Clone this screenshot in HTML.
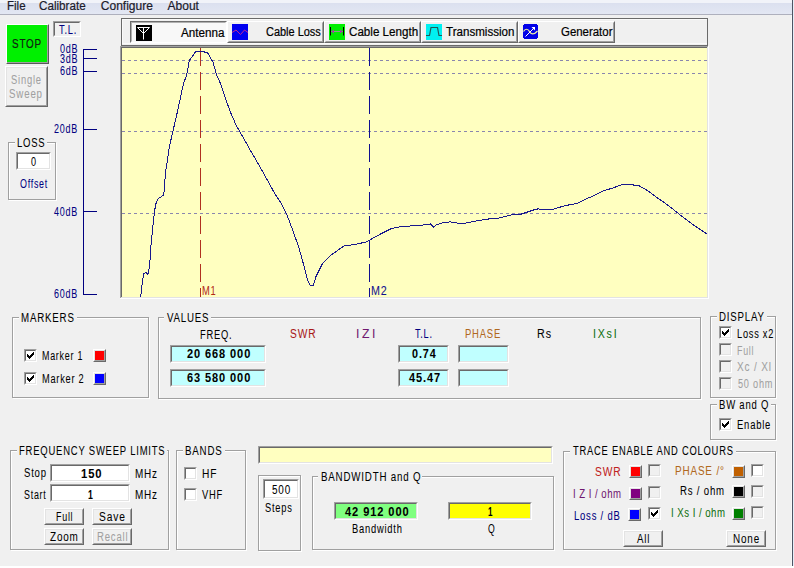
<!DOCTYPE html><html><head><meta charset="utf-8"><style>
html,body{margin:0;padding:0;width:794px;height:568px;overflow:hidden;background:#f0f0f0;position:relative}
.t{position:absolute;font-family:'Liberation Sans',sans-serif;white-space:nowrap;transform-origin:0 0;-webkit-text-stroke:0.05px currentColor}
.r{position:absolute;box-sizing:content-box}
</style></head><body>
<div class="r" style="left:0;top:0;width:794px;height:3px;background:#f1f3f9"></div>
<div class="r" style="left:0;top:3px;width:794px;height:11px;background:linear-gradient(#dbe0ef,#e3e7f3)"></div>
<div class="r" style="left:0px;top:14px;width:794px;height:1px;background:#aeb0bd"></div>
<div class="t" style="left:6.64px;top:-1px;font-size:12px;line-height:14px;color:#1b1b2b;transform:scaleX(0.961);-webkit-text-stroke:0.2px currentColor;">File</div>
<div class="t" style="left:39.00px;top:-1px;font-size:12px;line-height:14px;color:#1b1b2b;transform:scaleX(0.971);-webkit-text-stroke:0.2px currentColor;">Calibrate</div>
<div class="t" style="left:100.80px;top:-1px;font-size:12px;line-height:14px;color:#1b1b2b;-webkit-text-stroke:0.2px currentColor;">Configure</div>
<div class="t" style="left:167.60px;top:-1px;font-size:12px;line-height:14px;color:#1b1b2b;-webkit-text-stroke:0.2px currentColor;">About</div>
<div class="r" style="left:792px;top:0px;width:1px;height:566px;background:#4d5564"></div>
<div class="r" style="left:791px;top:15px;width:1px;height:551px;background:#f8f8f8"></div>
<div class="r" style="left:793px;top:0px;width:1px;height:568px;background:#e6eef8"></div>
<div class="r" style="left:0px;top:566px;width:794px;height:2px;background:#ffffff"></div>
<div class="r" style="left:6px;top:24px;width:41px;height:38px;border:1px solid;border-color:#fff #5a5a5a #5a5a5a #fff"></div>
<div class="r" style="left:7px;top:25px;width:40px;height:37px;border:solid #a0a0a0;border-width:0 1px 1px 0;background:#00f000"></div>
<div class="t" style="left:11.98px;top:37px;font-size:12px;line-height:14px;letter-spacing:1.0px;color:#102010;transform:scaleX(0.821);-webkit-text-stroke:0.2px currentColor;">STOP</div>
<div class="r" style="left:5px;top:66px;width:41px;height:39px;border:1px solid;border-color:#fff #696969 #696969 #fff"></div>
<div class="r" style="left:6px;top:67px;width:39px;height:37px;border:1px solid;border-color:#e3e3e3 #a0a0a0 #a0a0a0 #e3e3e3;background:#f0f0f0"></div>
<div class="t" style="left:10.62px;top:73px;font-size:12px;line-height:14px;letter-spacing:1.0px;color:#a0a0a0;transform:scaleX(0.781);">Single</div>
<div class="t" style="left:8.79px;top:87px;font-size:12px;line-height:14px;letter-spacing:1.0px;color:#a0a0a0;transform:scaleX(0.812);">Sweep</div>
<div class="r" style="left:53px;top:21px;width:26px;height:14px;border:1px solid;border-color:#a0a0a0 #fff #fff #a0a0a0"></div>
<div class="r" style="left:54px;top:22px;width:24px;height:12px;border:1px solid;border-color:#696969 #f0f0f0 #f0f0f0 #696969;background:#f0f0f0"></div>
<div class="t" style="left:59.10px;top:23px;font-size:12px;line-height:14px;letter-spacing:1.0px;color:#000080;transform:scaleX(0.777);">T.L.</div>
<div class="r" style="left:83px;top:49px;width:1px;height:246px;background:#000080"></div>
<div class="r" style="left:83px;top:49px;width:14px;height:1px;background:#000080"></div>
<div class="r" style="left:83px;top:58px;width:14px;height:1px;background:#000080"></div>
<div class="r" style="left:83px;top:71px;width:14px;height:1px;background:#000080"></div>
<div class="r" style="left:83px;top:129px;width:14px;height:1px;background:#000080"></div>
<div class="r" style="left:83px;top:211px;width:14px;height:1px;background:#000080"></div>
<div class="r" style="left:83px;top:294px;width:14px;height:1px;background:#000080"></div>
<div class="t" style="left:59.70px;top:42px;font-size:12px;line-height:14px;letter-spacing:1.0px;color:#000080;transform:scaleX(0.752);">0dB</div>
<div class="t" style="left:59.70px;top:52px;font-size:12px;line-height:14px;letter-spacing:1.0px;color:#000080;transform:scaleX(0.752);">3dB</div>
<div class="t" style="left:59.70px;top:64px;font-size:12px;line-height:14px;letter-spacing:1.0px;color:#000080;transform:scaleX(0.752);">6dB</div>
<div class="t" style="left:54.00px;top:122px;font-size:12px;line-height:14px;letter-spacing:1.0px;color:#000080;transform:scaleX(0.748);">20dB</div>
<div class="t" style="left:54.00px;top:205px;font-size:12px;line-height:14px;letter-spacing:1.0px;color:#000080;transform:scaleX(0.748);">40dB</div>
<div class="t" style="left:54.00px;top:287px;font-size:12px;line-height:14px;letter-spacing:1.0px;color:#000080;transform:scaleX(0.748);">60dB</div>
<div class="r" style="left:9px;top:143px;width:46px;height:56px;border:1px solid #fff"></div>
<div class="r" style="left:8px;top:142px;width:46px;height:56px;border:1px solid #a0a0a0"></div>
<div class="r" style="left:15px;top:141px;width:32px;height:4px;background:#f0f0f0"></div>
<div class="t" style="left:16.81px;top:136px;font-size:12px;line-height:14px;letter-spacing:1.0px;color:#000;transform:scaleX(0.791);">LOSS</div>
<div class="r" style="left:16px;top:152px;width:33px;height:16px;border:1px solid;border-color:#a0a0a0 #fff #fff #a0a0a0"></div>
<div class="r" style="left:17px;top:153px;width:31px;height:14px;border:1px solid;border-color:#696969 #e3e3e3 #e3e3e3 #696969;background:#fff"></div>
<div class="t" style="left:31.00px;top:155px;font-size:12px;line-height:14px;letter-spacing:1.0px;color:#000;transform:scaleX(0.757);">0</div>
<div class="t" style="left:19.80px;top:177px;font-size:12px;line-height:14px;letter-spacing:1.0px;color:#000080;transform:scaleX(0.741);">Offset</div>
<div class="r" style="left:121px;top:18px;width:585px;height:26px;border:1px solid;border-color:#6a6a6a #6a6a6a #6a6a6a #6a6a6a;background:#f0f0f0"></div>
<div class="r" style="left:122px;top:19px;width:585px;height:1px;background:#fafafa"></div>
<div class="r" style="left:122px;top:19px;width:1px;height:25px;background:#fafafa"></div>
<div class="r" style="left:130px;top:21px;width:95px;height:20px;border:1px solid;border-color:#6e6e6e #fff #fff #6e6e6e"></div>
<div class="r" style="left:131px;top:22px;width:93px;height:18px;border:1px solid;border-color:#b0b0b0 #f8f8f8 #f8f8f8 #b0b0b0;background:#f8f8f8"></div>
<svg class="r" style="left:136px;top:25px" width="16" height="16"><rect width="16" height="16" fill="#000"/><path d="M1.5 2.5H13.5M1.5 2.5L7.5 8.5L13.5 2.5M7.5 2.5V14.5" stroke="#fff" stroke-width="1" fill="none"/></svg>
<div class="t" style="left:180.50px;top:26px;font-size:12px;line-height:14px;color:#000;transform:scaleX(0.973);-webkit-text-stroke:0.2px currentColor;">Antenna</div>
<div class="r" style="left:227px;top:21px;width:95px;height:20px;border:1px solid;border-color:#fff #696969 #696969 #fff"></div>
<div class="r" style="left:228px;top:22px;width:93px;height:18px;border:1px solid;border-color:#f0f0f0 #a0a0a0 #a0a0a0 #f0f0f0"></div>
<div class="r" style="left:324px;top:21px;width:95px;height:20px;border:1px solid;border-color:#fff #696969 #696969 #fff"></div>
<div class="r" style="left:325px;top:22px;width:93px;height:18px;border:1px solid;border-color:#f0f0f0 #a0a0a0 #a0a0a0 #f0f0f0"></div>
<div class="r" style="left:421px;top:21px;width:95px;height:20px;border:1px solid;border-color:#fff #696969 #696969 #fff"></div>
<div class="r" style="left:422px;top:22px;width:93px;height:18px;border:1px solid;border-color:#f0f0f0 #a0a0a0 #a0a0a0 #f0f0f0"></div>
<div class="r" style="left:518px;top:21px;width:95px;height:20px;border:1px solid;border-color:#fff #696969 #696969 #fff"></div>
<div class="r" style="left:519px;top:22px;width:93px;height:18px;border:1px solid;border-color:#f0f0f0 #a0a0a0 #a0a0a0 #f0f0f0"></div>
<svg class="r" style="left:232px;top:24px" width="16" height="16"><rect width="16" height="16" fill="#0000f0"/><path d="M0 8.5L4 6L8.5 10.5L12.5 6L16 8.5" stroke="#c02890" stroke-width="1" fill="none"/></svg>
<div class="t" style="left:265.80px;top:25px;font-size:12px;line-height:14px;color:#000;transform:scaleX(0.913);-webkit-text-stroke:0.2px currentColor;">Cable Loss</div>
<svg class="r" style="left:329px;top:24px" width="16" height="16"><rect width="16" height="16" fill="#00ee00"/><path d="M1.5 3V11.5M14.5 3V11.5" stroke="#000" stroke-width="1"/><path d="M2 7.5H14" stroke="#909090" stroke-width="1"/><path d="M2 7.5L5 5.5V9.5Z M14 7.5L11 5.5V9.5Z" fill="#a040a0"/></svg>
<div class="t" style="left:348.50px;top:25px;font-size:12px;line-height:14px;color:#000;transform:scaleX(0.969);-webkit-text-stroke:0.2px currentColor;">Cable Length</div>
<svg class="r" style="left:426px;top:24px" width="16" height="16"><rect width="16" height="16" fill="#00f0f0"/><path d="M0 11.5H3.5L5 3.5H11.5L13 11.5H16" stroke="#205858" stroke-width="1.2" fill="none"/></svg>
<div class="t" style="left:445.70px;top:25px;font-size:12px;line-height:14px;color:#000;transform:scaleX(0.965);-webkit-text-stroke:0.2px currentColor;">Transmission</div>
<svg class="r" style="left:523px;top:24px" width="15" height="15"><path d="M1 0H14V1H15V14H14V15H1V14H0V1H1Z" fill="#0000e8"/><path d="M0.5 7.5C2 4.5 5 4.5 6.5 7.5S11 11 14.5 7" stroke="#f0f0a0" stroke-width="1.2" fill="none"/><path d="M2.5 12.5L11.5 3.5" stroke="#fff" stroke-width="1"/><path d="M8.5 3H12V6.5Z" fill="#fff"/></svg>
<div class="t" style="left:560.60px;top:25px;font-size:12px;line-height:14px;color:#000;transform:scaleX(0.952);-webkit-text-stroke:0.2px currentColor;">Generator</div>
<div class="r" style="left:122px;top:43px;width:585px;height:1px;background:#fafafa"></div>
<div class="r" style="left:120px;top:46px;width:589px;height:253px;background:#fff"></div>
<div class="r" style="left:120px;top:46px;width:588px;height:252px;background:#a0a0a0"></div>
<div class="r" style="left:121px;top:47px;width:587px;height:251px;background:#e3e3e3"></div>
<div class="r" style="left:121px;top:47px;width:586px;height:250px;background:#696969"></div>
<div class="r" style="left:122px;top:48px;width:585px;height:249px;background:#ffffc0"></div>
<svg class="r" style="left:122px;top:48px" width="585" height="249"><path d="M0 12.5H585" stroke="#8a86ae" stroke-width="1" stroke-dasharray="3 3"/><path d="M0 25.5H585" stroke="#8a86ae" stroke-width="1" stroke-dasharray="3 3"/><path d="M0 83.5H585" stroke="#8a86ae" stroke-width="1" stroke-dasharray="3 3"/><path d="M0 165.5H585" stroke="#8a86ae" stroke-width="1" stroke-dasharray="3 3"/><path d="M78.5 0V249" stroke="#b03020" stroke-width="1" stroke-dasharray="18 6"/><path d="M247.5 0V249" stroke="#101090" stroke-width="1" stroke-dasharray="18 6"/><polyline points="18.6,249.5 20.1,236.0 21.7,225.5 23.9,224.4 26.0,226.5 27.7,217.0 29.1,195.9 31.2,174.8 32.7,162.1 34.4,153.6 36.5,150.5 41.8,146.9 42.9,132.5 43.7,123.5 47.6,97.5 50.8,83.8 55.7,62.6 61.3,36.2 64.8,26.5 67.3,12.7 73.7,3.5 82.2,3.5 82.8,4.5 85.4,4.5 91.1,14.5 94.8,27.4 99.2,37.1 102.7,48.5 108.5,64.4 114.1,77.1 128.1,101.8 142.2,126.4 152.8,145.7 158.5,154.3 165.5,168.3 170.8,182.4 177.0,200.0 181.4,215.9 185.8,232.6 188.4,237.4 191.6,237.0 193.7,229.1 200.8,215.0 207.8,208.0 216.6,201.8 221.9,197.9 232.4,196.5 244.8,193.9 248.5,191.5 259.2,185.7 269.9,180.3 278.5,178.8 291.3,177.7 299.9,177.1 308.5,176.0 311.7,179.2 313.8,177.1 321.3,174.5 328.8,173.9 338.4,175.6 342.7,175.2 355.5,172.8 368.4,170.7 377.0,170.0 389.8,166.8 398.4,166.4 411.2,162.1 415.5,161.0 431.2,161.2 442.5,157.8 456.1,155.1 462.9,151.5 472.0,147.6 481.0,143.1 490.1,140.2 499.2,137.0 508.2,136.5 517.3,137.9 526.4,143.1 535.5,149.9 546.8,157.8 558.1,166.9 571.7,177.1 585.3,186.2" stroke="#18188c" stroke-width="1" fill="none" shape-rendering="crispEdges"/></svg>
<div class="t" style="left:201.92px;top:284px;font-size:12px;line-height:14px;letter-spacing:1.0px;color:#b02818;transform:scaleX(0.776);">M1</div>
<div class="t" style="left:371.01px;top:284px;font-size:12px;line-height:14px;letter-spacing:1.0px;color:#101090;transform:scaleX(0.894);">M2</div>
<div class="r" style="left:13px;top:318px;width:135px;height:79px;border:1px solid #fff"></div>
<div class="r" style="left:12px;top:317px;width:135px;height:79px;border:1px solid #a0a0a0"></div>
<div class="r" style="left:19px;top:316px;width:58px;height:4px;background:#f0f0f0"></div>
<div class="t" style="left:20.79px;top:311px;font-size:12px;line-height:14px;letter-spacing:1.0px;color:#000;transform:scaleX(0.809);">MARKERS</div>
<div class="r" style="left:24px;top:349px;width:11px;height:11px;border:1px solid;border-color:#a0a0a0 #fff #fff #a0a0a0"></div>
<div class="r" style="left:25px;top:350px;width:9px;height:9px;border:1px solid;border-color:#696969 #e3e3e3 #e3e3e3 #696969;background:#fff"></div>
<svg class="r" style="left:24px;top:349px" width="13" height="13"><path d="M9 3h1v1h-1zM8 4h1v1h-1zM9 4h1v1h-1zM3 5h1v1h-1zM7 5h1v1h-1zM8 5h1v1h-1zM9 5h1v1h-1zM3 6h1v1h-1zM4 6h1v1h-1zM6 6h1v1h-1zM7 6h1v1h-1zM8 6h1v1h-1zM3 7h1v1h-1zM4 7h1v1h-1zM5 7h1v1h-1zM6 7h1v1h-1zM7 7h1v1h-1zM4 8h1v1h-1zM5 8h1v1h-1zM6 8h1v1h-1zM5 9h1v1h-1z" fill="#000"/></svg>
<div class="t" style="left:42.06px;top:349px;font-size:12px;line-height:14px;letter-spacing:1.0px;color:#000;transform:scaleX(0.743);">Marker 1</div>
<div class="r" style="left:93px;top:349px;width:11px;height:11px;border:1px solid;border-color:#fff #696969 #696969 #fff"></div>
<div class="r" style="left:94px;top:350px;width:9px;height:9px;border:1px solid;border-color:#e3e3e3 #a0a0a0 #a0a0a0 #e3e3e3;background:#ff0000"></div>
<div class="r" style="left:24px;top:372px;width:11px;height:11px;border:1px solid;border-color:#a0a0a0 #fff #fff #a0a0a0"></div>
<div class="r" style="left:25px;top:373px;width:9px;height:9px;border:1px solid;border-color:#696969 #e3e3e3 #e3e3e3 #696969;background:#fff"></div>
<svg class="r" style="left:24px;top:372px" width="13" height="13"><path d="M9 3h1v1h-1zM8 4h1v1h-1zM9 4h1v1h-1zM3 5h1v1h-1zM7 5h1v1h-1zM8 5h1v1h-1zM9 5h1v1h-1zM3 6h1v1h-1zM4 6h1v1h-1zM6 6h1v1h-1zM7 6h1v1h-1zM8 6h1v1h-1zM3 7h1v1h-1zM4 7h1v1h-1zM5 7h1v1h-1zM6 7h1v1h-1zM7 7h1v1h-1zM4 8h1v1h-1zM5 8h1v1h-1zM6 8h1v1h-1zM5 9h1v1h-1z" fill="#000"/></svg>
<div class="t" style="left:42.03px;top:372px;font-size:12px;line-height:14px;letter-spacing:1.0px;color:#000;transform:scaleX(0.768);">Marker 2</div>
<div class="r" style="left:93px;top:372px;width:11px;height:11px;border:1px solid;border-color:#fff #696969 #696969 #fff"></div>
<div class="r" style="left:94px;top:373px;width:9px;height:9px;border:1px solid;border-color:#e3e3e3 #a0a0a0 #a0a0a0 #e3e3e3;background:#0000ff"></div>
<div class="r" style="left:159px;top:318px;width:541px;height:80px;border:1px solid #fff"></div>
<div class="r" style="left:158px;top:317px;width:541px;height:80px;border:1px solid #a0a0a0"></div>
<div class="r" style="left:164px;top:316px;width:47px;height:4px;background:#f0f0f0"></div>
<div class="t" style="left:167.00px;top:311px;font-size:12px;line-height:14px;letter-spacing:1.0px;color:#000;transform:scaleX(0.808);">VALUES</div>
<div class="t" style="left:200.02px;top:328px;font-size:12px;line-height:14px;letter-spacing:1.0px;color:#000;transform:scaleX(0.777);">FREQ.</div>
<div class="t" style="left:289.95px;top:327px;font-size:12px;line-height:14px;letter-spacing:1.0px;color:#a81818;transform:scaleX(0.852);">SWR</div>
<div class="t" style="left:355.98px;top:327px;font-size:12px;line-height:14px;letter-spacing:2.5px;color:#701870;transform:scaleX(1.018);">IZI</div>
<div class="t" style="left:414.50px;top:327px;font-size:12px;line-height:14px;letter-spacing:1.0px;color:#000080;transform:scaleX(0.759);">T.L.</div>
<div class="t" style="left:465.21px;top:327px;font-size:12px;line-height:14px;letter-spacing:1.0px;color:#b06820;transform:scaleX(0.789);">PHASE</div>
<div class="t" style="left:537.21px;top:327px;font-size:12px;line-height:14px;letter-spacing:1.0px;color:#000;transform:scaleX(0.893);">Rs</div>
<div class="t" style="left:592.61px;top:327px;font-size:12px;line-height:14px;letter-spacing:2px;color:#107010;transform:scaleX(0.888);">IXsI</div>
<div class="r" style="left:170px;top:345px;width:94px;height:16px;border:1px solid;border-color:#a0a0a0 #fff #fff #a0a0a0"></div>
<div class="r" style="left:171px;top:346px;width:92px;height:14px;border:1px solid;border-color:#696969 #e3e3e3 #e3e3e3 #696969;background:#c0ffff"></div>
<div class="t" style="left:187.00px;top:347px;font-size:12px;line-height:14px;font-weight:bold;letter-spacing:1.0px;color:#000;transform:scaleX(0.916);">20 668 000</div>
<div class="r" style="left:170px;top:369px;width:94px;height:16px;border:1px solid;border-color:#a0a0a0 #fff #fff #a0a0a0"></div>
<div class="r" style="left:171px;top:370px;width:92px;height:14px;border:1px solid;border-color:#696969 #e3e3e3 #e3e3e3 #696969;background:#c0ffff"></div>
<div class="t" style="left:187.00px;top:371px;font-size:12px;line-height:14px;font-weight:bold;letter-spacing:1.0px;color:#000;transform:scaleX(0.916);">63 580 000</div>
<div class="r" style="left:398px;top:345px;width:49px;height:16px;border:1px solid;border-color:#a0a0a0 #fff #fff #a0a0a0"></div>
<div class="r" style="left:399px;top:346px;width:47px;height:14px;border:1px solid;border-color:#696969 #e3e3e3 #e3e3e3 #696969;background:#c0ffff"></div>
<div class="t" style="left:411.50px;top:347px;font-size:12px;line-height:14px;font-weight:bold;letter-spacing:1.0px;color:#000;transform:scaleX(0.896);">0.74</div>
<div class="r" style="left:398px;top:369px;width:49px;height:16px;border:1px solid;border-color:#a0a0a0 #fff #fff #a0a0a0"></div>
<div class="r" style="left:399px;top:370px;width:47px;height:14px;border:1px solid;border-color:#696969 #e3e3e3 #e3e3e3 #696969;background:#c0ffff"></div>
<div class="t" style="left:408.50px;top:371px;font-size:12px;line-height:14px;font-weight:bold;letter-spacing:1.0px;color:#000;transform:scaleX(0.915);">45.47</div>
<div class="r" style="left:458px;top:345px;width:49px;height:16px;border:1px solid;border-color:#a0a0a0 #fff #fff #a0a0a0"></div>
<div class="r" style="left:459px;top:346px;width:47px;height:14px;border:1px solid;border-color:#696969 #e3e3e3 #e3e3e3 #696969;background:#c0ffff"></div>
<div class="r" style="left:458px;top:369px;width:49px;height:16px;border:1px solid;border-color:#a0a0a0 #fff #fff #a0a0a0"></div>
<div class="r" style="left:459px;top:370px;width:47px;height:14px;border:1px solid;border-color:#696969 #e3e3e3 #e3e3e3 #696969;background:#c0ffff"></div>
<div class="r" style="left:711px;top:317px;width:64px;height:80px;border:1px solid #fff"></div>
<div class="r" style="left:710px;top:316px;width:64px;height:80px;border:1px solid #a0a0a0"></div>
<div class="r" style="left:717px;top:315px;width:50px;height:4px;background:#f0f0f0"></div>
<div class="t" style="left:719.10px;top:310px;font-size:12px;line-height:14px;letter-spacing:1.0px;color:#000;transform:scaleX(0.804);">DISPLAY</div>
<div class="r" style="left:719px;top:326px;width:11px;height:11px;border:1px solid;border-color:#a0a0a0 #fff #fff #a0a0a0"></div>
<div class="r" style="left:720px;top:327px;width:9px;height:9px;border:1px solid;border-color:#696969 #e3e3e3 #e3e3e3 #696969;background:#fff"></div>
<svg class="r" style="left:719px;top:326px" width="13" height="13"><path d="M9 3h1v1h-1zM8 4h1v1h-1zM9 4h1v1h-1zM3 5h1v1h-1zM7 5h1v1h-1zM8 5h1v1h-1zM9 5h1v1h-1zM3 6h1v1h-1zM4 6h1v1h-1zM6 6h1v1h-1zM7 6h1v1h-1zM8 6h1v1h-1zM3 7h1v1h-1zM4 7h1v1h-1zM5 7h1v1h-1zM6 7h1v1h-1zM7 7h1v1h-1zM4 8h1v1h-1zM5 8h1v1h-1zM6 8h1v1h-1zM5 9h1v1h-1z" fill="#000"/></svg>
<div class="t" style="left:736.93px;top:327px;font-size:12px;line-height:14px;letter-spacing:1.0px;color:#000;transform:scaleX(0.767);">Loss x2</div>
<div class="r" style="left:719px;top:343px;width:11px;height:11px;border:1px solid;border-color:#a0a0a0 #fff #fff #a0a0a0"></div>
<div class="r" style="left:720px;top:344px;width:9px;height:9px;border:1px solid;border-color:#696969 #e3e3e3 #e3e3e3 #696969;background:#f0f0f0"></div>
<div class="t" style="left:737.06px;top:344px;font-size:12px;line-height:14px;letter-spacing:1.0px;color:#a0a0a0;transform:scaleX(0.738);">Full</div>
<div class="r" style="left:719px;top:360px;width:11px;height:11px;border:1px solid;border-color:#a0a0a0 #fff #fff #a0a0a0"></div>
<div class="r" style="left:720px;top:361px;width:9px;height:9px;border:1px solid;border-color:#696969 #e3e3e3 #e3e3e3 #696969;background:#f0f0f0"></div>
<div class="t" style="left:736.80px;top:360px;font-size:12px;line-height:14px;letter-spacing:1.0px;color:#a0a0a0;transform:scaleX(0.835);">Xc / Xl</div>
<div class="r" style="left:719px;top:377px;width:11px;height:11px;border:1px solid;border-color:#a0a0a0 #fff #fff #a0a0a0"></div>
<div class="r" style="left:720px;top:378px;width:9px;height:9px;border:1px solid;border-color:#696969 #e3e3e3 #e3e3e3 #696969;background:#f0f0f0"></div>
<div class="t" style="left:737.80px;top:377px;font-size:12px;line-height:14px;letter-spacing:1.0px;color:#a0a0a0;transform:scaleX(0.764);">50 ohm</div>
<div class="r" style="left:711px;top:405px;width:64px;height:34px;border:1px solid #fff"></div>
<div class="r" style="left:710px;top:404px;width:64px;height:34px;border:1px solid #a0a0a0"></div>
<div class="r" style="left:717px;top:403px;width:54px;height:4px;background:#f0f0f0"></div>
<div class="t" style="left:718.71px;top:398px;font-size:12px;line-height:14px;letter-spacing:1.0px;color:#000;transform:scaleX(0.793);">BW and Q</div>
<div class="r" style="left:719px;top:418px;width:11px;height:11px;border:1px solid;border-color:#a0a0a0 #fff #fff #a0a0a0"></div>
<div class="r" style="left:720px;top:419px;width:9px;height:9px;border:1px solid;border-color:#696969 #e3e3e3 #e3e3e3 #696969;background:#fff"></div>
<svg class="r" style="left:719px;top:418px" width="13" height="13"><path d="M9 3h1v1h-1zM8 4h1v1h-1zM9 4h1v1h-1zM3 5h1v1h-1zM7 5h1v1h-1zM8 5h1v1h-1zM9 5h1v1h-1zM3 6h1v1h-1zM4 6h1v1h-1zM6 6h1v1h-1zM7 6h1v1h-1zM8 6h1v1h-1zM3 7h1v1h-1zM4 7h1v1h-1zM5 7h1v1h-1zM6 7h1v1h-1zM7 7h1v1h-1zM4 8h1v1h-1zM5 8h1v1h-1zM6 8h1v1h-1zM5 9h1v1h-1z" fill="#000"/></svg>
<div class="t" style="left:736.91px;top:418px;font-size:12px;line-height:14px;letter-spacing:1.0px;color:#000;transform:scaleX(0.788);">Enable</div>
<div class="r" style="left:11px;top:451px;width:157px;height:98px;border:1px solid #fff"></div>
<div class="r" style="left:10px;top:450px;width:157px;height:98px;border:1px solid #a0a0a0"></div>
<div class="r" style="left:17px;top:449px;width:150px;height:4px;background:#f0f0f0"></div>
<div class="t" style="left:19.21px;top:444px;font-size:12px;line-height:14px;letter-spacing:1.0px;color:#000;transform:scaleX(0.789);">FREQUENCY SWEEP LIMITS</div>
<div class="t" style="left:23.90px;top:466px;font-size:12px;line-height:14px;letter-spacing:1.0px;color:#000;transform:scaleX(0.796);">Stop</div>
<div class="r" style="left:50px;top:464px;width:78px;height:16px;border:1px solid;border-color:#a0a0a0 #fff #fff #a0a0a0"></div>
<div class="r" style="left:51px;top:465px;width:76px;height:14px;border:1px solid;border-color:#696969 #e3e3e3 #e3e3e3 #696969;background:#fff"></div>
<div class="t" style="left:80.70px;top:467px;font-size:12px;line-height:14px;font-weight:bold;letter-spacing:1.0px;color:#000;transform:scaleX(0.936);">150</div>
<div class="t" style="left:134.87px;top:467px;font-size:12px;line-height:14px;letter-spacing:1.0px;color:#000;transform:scaleX(0.827);">MHz</div>
<div class="t" style="left:23.96px;top:488px;font-size:12px;line-height:14px;letter-spacing:1.0px;color:#000;transform:scaleX(0.741);">Start</div>
<div class="r" style="left:50px;top:484px;width:78px;height:16px;border:1px solid;border-color:#a0a0a0 #fff #fff #a0a0a0"></div>
<div class="r" style="left:51px;top:485px;width:76px;height:14px;border:1px solid;border-color:#696969 #e3e3e3 #e3e3e3 #696969;background:#fff"></div>
<div class="t" style="left:88.00px;top:488px;font-size:12px;line-height:14px;font-weight:bold;letter-spacing:1.0px;color:#000;transform:scaleX(0.729);">1</div>
<div class="t" style="left:134.87px;top:488px;font-size:12px;line-height:14px;letter-spacing:1.0px;color:#000;transform:scaleX(0.827);">MHz</div>
<div class="r" style="left:44px;top:508px;width:38px;height:15px;border:1px solid;border-color:#fff #696969 #696969 #fff"></div>
<div class="r" style="left:45px;top:509px;width:36px;height:13px;border:1px solid;border-color:#e3e3e3 #a0a0a0 #a0a0a0 #e3e3e3;background:#f0f0f0"></div>
<div class="t" style="left:55.96px;top:510px;font-size:12px;line-height:14px;letter-spacing:1.0px;color:#000;transform:scaleX(0.743);">Full</div>
<div class="r" style="left:92px;top:508px;width:38px;height:15px;border:1px solid;border-color:#fff #696969 #696969 #fff"></div>
<div class="r" style="left:93px;top:509px;width:36px;height:13px;border:1px solid;border-color:#e3e3e3 #a0a0a0 #a0a0a0 #e3e3e3;background:#f0f0f0"></div>
<div class="t" style="left:98.75px;top:510px;font-size:12px;line-height:14px;letter-spacing:1.0px;color:#000;transform:scaleX(0.852);">Save</div>
<div class="r" style="left:44px;top:528px;width:38px;height:15px;border:1px solid;border-color:#fff #696969 #696969 #fff"></div>
<div class="r" style="left:45px;top:529px;width:36px;height:13px;border:1px solid;border-color:#e3e3e3 #a0a0a0 #a0a0a0 #e3e3e3;background:#f0f0f0"></div>
<div class="t" style="left:49.80px;top:530px;font-size:12px;line-height:14px;letter-spacing:1.0px;color:#000;transform:scaleX(0.827);">Zoom</div>
<div class="r" style="left:92px;top:528px;width:38px;height:15px;border:1px solid;border-color:#fff #696969 #696969 #fff"></div>
<div class="r" style="left:93px;top:529px;width:36px;height:13px;border:1px solid;border-color:#e3e3e3 #a0a0a0 #a0a0a0 #e3e3e3;background:#f0f0f0"></div>
<div class="t" style="left:97.00px;top:530px;font-size:12px;line-height:14px;letter-spacing:1.0px;color:#a0a0a0;transform:scaleX(0.797);">Recall</div>
<div class="r" style="left:177px;top:451px;width:68px;height:98px;border:1px solid #fff"></div>
<div class="r" style="left:176px;top:450px;width:68px;height:98px;border:1px solid #a0a0a0"></div>
<div class="r" style="left:183px;top:449px;width:42px;height:4px;background:#f0f0f0"></div>
<div class="t" style="left:184.89px;top:444px;font-size:12px;line-height:14px;letter-spacing:1.0px;color:#000;transform:scaleX(0.811);">BANDS</div>
<div class="r" style="left:184px;top:467px;width:11px;height:11px;border:1px solid;border-color:#a0a0a0 #fff #fff #a0a0a0"></div>
<div class="r" style="left:185px;top:468px;width:9px;height:9px;border:1px solid;border-color:#696969 #e3e3e3 #e3e3e3 #696969;background:#fff"></div>
<div class="t" style="left:201.55px;top:467px;font-size:12px;line-height:14px;letter-spacing:1.0px;color:#000;transform:scaleX(0.850);">HF</div>
<div class="r" style="left:184px;top:488px;width:11px;height:11px;border:1px solid;border-color:#a0a0a0 #fff #fff #a0a0a0"></div>
<div class="r" style="left:185px;top:489px;width:9px;height:9px;border:1px solid;border-color:#696969 #e3e3e3 #e3e3e3 #696969;background:#fff"></div>
<div class="t" style="left:202.40px;top:488px;font-size:12px;line-height:14px;letter-spacing:1.0px;color:#000;transform:scaleX(0.781);">VHF</div>
<div class="r" style="left:258px;top:446px;width:293px;height:16px;border:1px solid;border-color:#a0a0a0 #fff #fff #a0a0a0"></div>
<div class="r" style="left:259px;top:447px;width:291px;height:14px;border:1px solid;border-color:#696969 #e3e3e3 #e3e3e3 #696969;background:#ffffc0"></div>
<div class="r" style="left:259px;top:476px;width:41px;height:74px;border:1px solid #fff"></div>
<div class="r" style="left:258px;top:475px;width:41px;height:74px;border:1px solid #a0a0a0"></div>
<div class="r" style="left:263px;top:479px;width:34px;height:18px;border:1px solid;border-color:#a0a0a0 #fff #fff #a0a0a0"></div>
<div class="r" style="left:264px;top:480px;width:32px;height:16px;border:1px solid;border-color:#696969 #e3e3e3 #e3e3e3 #696969;background:#fff"></div>
<div class="t" style="left:272.30px;top:483px;font-size:12px;line-height:14px;letter-spacing:1.0px;color:#000;transform:scaleX(0.827);">500</div>
<div class="t" style="left:265.03px;top:501px;font-size:12px;line-height:14px;letter-spacing:1.0px;color:#000;transform:scaleX(0.774);">Steps</div>
<div class="r" style="left:313px;top:477px;width:240px;height:72px;border:1px solid #fff"></div>
<div class="r" style="left:312px;top:476px;width:240px;height:72px;border:1px solid #a0a0a0"></div>
<div class="r" style="left:318px;top:475px;width:104px;height:4px;background:#f0f0f0"></div>
<div class="t" style="left:320.59px;top:470px;font-size:12px;line-height:14px;letter-spacing:1.0px;color:#000;transform:scaleX(0.812);">BANDWIDTH and Q</div>
<div class="r" style="left:334px;top:502px;width:82px;height:16px;border:1px solid;border-color:#a0a0a0 #fff #fff #a0a0a0"></div>
<div class="r" style="left:335px;top:503px;width:80px;height:14px;border:1px solid;border-color:#696969 #e3e3e3 #e3e3e3 #696969;background:#80ff80"></div>
<div class="t" style="left:344.50px;top:505px;font-size:12px;line-height:14px;font-weight:bold;letter-spacing:1.0px;color:#000;transform:scaleX(0.922);">42 912 000</div>
<div class="t" style="left:351.92px;top:522px;font-size:12px;line-height:14px;letter-spacing:1.0px;color:#000;transform:scaleX(0.779);">Bandwidth</div>
<div class="r" style="left:448px;top:502px;width:82px;height:16px;border:1px solid;border-color:#a0a0a0 #fff #fff #a0a0a0"></div>
<div class="r" style="left:449px;top:503px;width:80px;height:14px;border:1px solid;border-color:#696969 #e3e3e3 #e3e3e3 #696969;background:#ffff00"></div>
<div class="t" style="left:487.90px;top:505px;font-size:12px;line-height:14px;font-weight:bold;letter-spacing:1.0px;color:#000;transform:scaleX(0.671);">1</div>
<div class="t" style="left:487.90px;top:522px;font-size:12px;line-height:14px;letter-spacing:1.0px;color:#000;transform:scaleX(0.722);">Q</div>
<div class="r" style="left:564px;top:452px;width:211px;height:97px;border:1px solid #fff"></div>
<div class="r" style="left:563px;top:451px;width:211px;height:97px;border:1px solid #a0a0a0"></div>
<div class="r" style="left:570px;top:450px;width:166px;height:4px;background:#f0f0f0"></div>
<div class="t" style="left:573.20px;top:444px;font-size:12px;line-height:14px;letter-spacing:1.0px;color:#000;transform:scaleX(0.780);">TRACE ENABLE AND COLOURS</div>
<div class="t" style="left:594.65px;top:465px;font-size:12px;line-height:14px;letter-spacing:1.0px;color:#c02020;transform:scaleX(0.852);">SWR</div>
<div class="r" style="left:629px;top:465px;width:11px;height:11px;border:1px solid;border-color:#fff #696969 #696969 #fff"></div>
<div class="r" style="left:630px;top:466px;width:9px;height:9px;border:1px solid;border-color:#e3e3e3 #a0a0a0 #a0a0a0 #e3e3e3;background:#ff0000"></div>
<div class="r" style="left:648px;top:464px;width:11px;height:11px;border:1px solid;border-color:#a0a0a0 #fff #fff #a0a0a0"></div>
<div class="r" style="left:649px;top:465px;width:9px;height:9px;border:1px solid;border-color:#696969 #e3e3e3 #e3e3e3 #696969;background:#f0f0f0"></div>
<div class="t" style="left:572.80px;top:487px;font-size:12px;line-height:14px;letter-spacing:0.6px;color:#701870;transform:scaleX(0.800);">I Z I / ohm</div>
<div class="r" style="left:629px;top:487px;width:11px;height:11px;border:1px solid;border-color:#fff #696969 #696969 #fff"></div>
<div class="r" style="left:630px;top:488px;width:9px;height:9px;border:1px solid;border-color:#e3e3e3 #a0a0a0 #a0a0a0 #e3e3e3;background:#800080"></div>
<div class="r" style="left:648px;top:486px;width:11px;height:11px;border:1px solid;border-color:#a0a0a0 #fff #fff #a0a0a0"></div>
<div class="r" style="left:649px;top:487px;width:9px;height:9px;border:1px solid;border-color:#696969 #e3e3e3 #e3e3e3 #696969;background:#f0f0f0"></div>
<div class="t" style="left:574.41px;top:509px;font-size:12px;line-height:14px;letter-spacing:1.0px;color:#000080;transform:scaleX(0.789);">Loss / dB</div>
<div class="r" style="left:628px;top:508px;width:11px;height:11px;border:1px solid;border-color:#fff #696969 #696969 #fff"></div>
<div class="r" style="left:629px;top:509px;width:9px;height:9px;border:1px solid;border-color:#e3e3e3 #a0a0a0 #a0a0a0 #e3e3e3;background:#0000ff"></div>
<div class="r" style="left:648px;top:507px;width:11px;height:11px;border:1px solid;border-color:#a0a0a0 #fff #fff #a0a0a0"></div>
<div class="r" style="left:649px;top:508px;width:9px;height:9px;border:1px solid;border-color:#696969 #e3e3e3 #e3e3e3 #696969;background:#fff"></div>
<svg class="r" style="left:648px;top:507px" width="13" height="13"><path d="M9 3h1v1h-1zM8 4h1v1h-1zM9 4h1v1h-1zM3 5h1v1h-1zM7 5h1v1h-1zM8 5h1v1h-1zM9 5h1v1h-1zM3 6h1v1h-1zM4 6h1v1h-1zM6 6h1v1h-1zM7 6h1v1h-1zM8 6h1v1h-1zM3 7h1v1h-1zM4 7h1v1h-1zM5 7h1v1h-1zM6 7h1v1h-1zM7 7h1v1h-1zM4 8h1v1h-1zM5 8h1v1h-1zM6 8h1v1h-1zM5 9h1v1h-1z" fill="#000"/></svg>
<div class="t" style="left:675.37px;top:464px;font-size:12px;line-height:14px;letter-spacing:1.0px;color:#b06820;transform:scaleX(0.828);">PHASE /°</div>
<div class="r" style="left:732px;top:465px;width:11px;height:11px;border:1px solid;border-color:#fff #696969 #696969 #fff"></div>
<div class="r" style="left:733px;top:466px;width:9px;height:9px;border:1px solid;border-color:#e3e3e3 #a0a0a0 #a0a0a0 #e3e3e3;background:#c06000"></div>
<div class="r" style="left:751px;top:464px;width:11px;height:11px;border:1px solid;border-color:#a0a0a0 #fff #fff #a0a0a0"></div>
<div class="r" style="left:752px;top:465px;width:9px;height:9px;border:1px solid;border-color:#696969 #e3e3e3 #e3e3e3 #696969;background:#fff"></div>
<div class="t" style="left:680.30px;top:484px;font-size:12px;line-height:14px;letter-spacing:1.0px;color:#000;transform:scaleX(0.802);">Rs / ohm</div>
<div class="r" style="left:732px;top:485px;width:11px;height:11px;border:1px solid;border-color:#fff #696969 #696969 #fff"></div>
<div class="r" style="left:733px;top:486px;width:9px;height:9px;border:1px solid;border-color:#e3e3e3 #a0a0a0 #a0a0a0 #e3e3e3;background:#000000"></div>
<div class="r" style="left:751px;top:485px;width:11px;height:11px;border:1px solid;border-color:#a0a0a0 #fff #fff #a0a0a0"></div>
<div class="r" style="left:752px;top:486px;width:9px;height:9px;border:1px solid;border-color:#696969 #e3e3e3 #e3e3e3 #696969;background:#f0f0f0"></div>
<div class="t" style="left:670.50px;top:506px;font-size:12px;line-height:14px;letter-spacing:0.6px;color:#107010;transform:scaleX(0.802);">I Xs I / ohm</div>
<div class="r" style="left:732px;top:507px;width:11px;height:11px;border:1px solid;border-color:#fff #696969 #696969 #fff"></div>
<div class="r" style="left:733px;top:508px;width:9px;height:9px;border:1px solid;border-color:#e3e3e3 #a0a0a0 #a0a0a0 #e3e3e3;background:#008000"></div>
<div class="r" style="left:751px;top:506px;width:11px;height:11px;border:1px solid;border-color:#a0a0a0 #fff #fff #a0a0a0"></div>
<div class="r" style="left:752px;top:507px;width:9px;height:9px;border:1px solid;border-color:#696969 #e3e3e3 #e3e3e3 #696969;background:#f0f0f0"></div>
<div class="r" style="left:623px;top:530px;width:38px;height:15px;border:1px solid;border-color:#fff #696969 #696969 #fff"></div>
<div class="r" style="left:624px;top:531px;width:36px;height:13px;border:1px solid;border-color:#e3e3e3 #a0a0a0 #a0a0a0 #e3e3e3;background:#f0f0f0"></div>
<div class="t" style="left:636.80px;top:532px;font-size:12px;line-height:14px;letter-spacing:1.0px;color:#000;transform:scaleX(0.807);">All</div>
<div class="r" style="left:726px;top:530px;width:38px;height:15px;border:1px solid;border-color:#fff #696969 #696969 #fff"></div>
<div class="r" style="left:727px;top:531px;width:36px;height:13px;border:1px solid;border-color:#e3e3e3 #a0a0a0 #a0a0a0 #e3e3e3;background:#f0f0f0"></div>
<div class="t" style="left:732.67px;top:532px;font-size:12px;line-height:14px;letter-spacing:1.0px;color:#000;transform:scaleX(0.826);">None</div>
</body></html>
